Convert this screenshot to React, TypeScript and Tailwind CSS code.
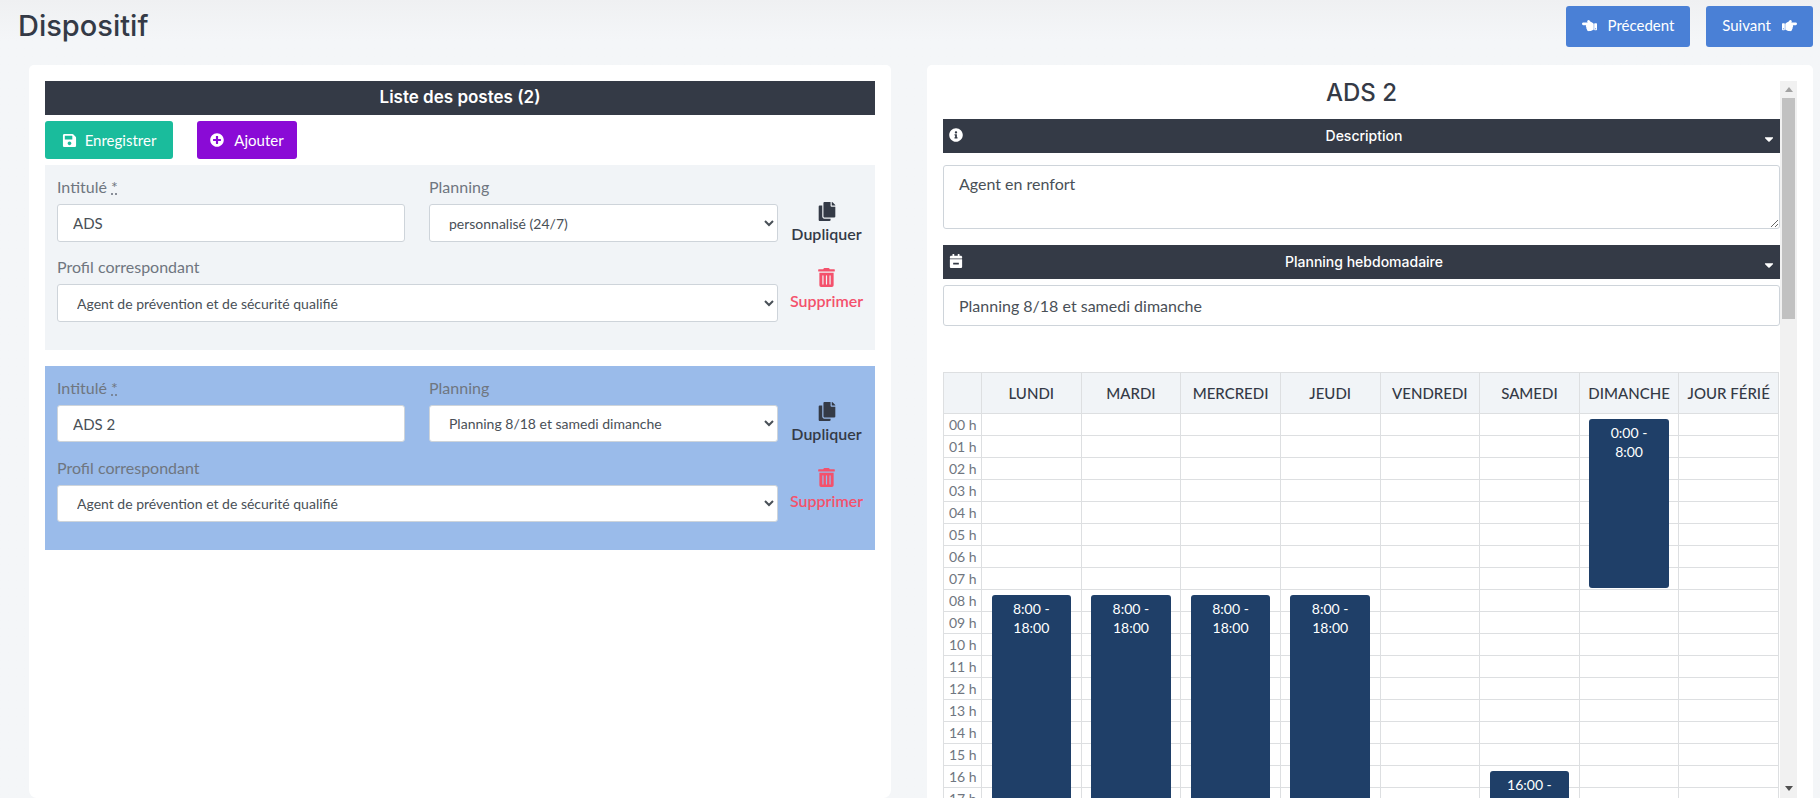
import { FaCalendarMinus, FaCaretDown, FaCopy, FaHandPointLeft, FaHandPointRight, FaInfoCircle, FaPlusCircle, FaSave, FaTrashAlt } from "react-icons/fa";

const DAYS = ["LUNDI", "MARDI", "MERCREDI", "JEUDI", "VENDREDI", "SAMEDI", "DIMANCHE", "JOUR FÉRIÉ"];
const HOURS = Array.from({ length: 18 }, (_, i) => String(i).padStart(2, "0") + " h");

const EVENTS = [
  { day: 0, hour: 8, label: "8:00 -", label2: "18:00", tall: true },
  { day: 1, hour: 8, label: "8:00 -", label2: "18:00", tall: true },
  { day: 2, hour: 8, label: "8:00 -", label2: "18:00", tall: true },
  { day: 3, hour: 8, label: "8:00 -", label2: "18:00", tall: true },
  { day: 5, hour: 16, label: "16:00 -", label2: "", tall: true },
  { day: 6, hour: 0, label: "0:00 -", label2: "8:00", tall: false },
];

function PosteForm({ intitule, planning, first }: { intitule: string; planning: string; first: boolean }) {
  const field = first ? "h-[38px]" : "h-[37px]";
  return (
    <div className={first ? "flex pl-3 mt-[6px] h-[185px] pt-[11px] bg-[#f1f4f7]" : "flex pl-3 mt-4 h-[184px] pt-[11px] bg-[#9abbea]"}>
      <div className="w-[721px]">
        <div className="grid grid-cols-[348px_349px] gap-x-6">
          <div>
            <label className="block h-[22px] mb-[6px] text-[16px] leading-[22px] text-[#6f7680]">
              Intitulé <abbr title="requis" className="underline decoration-dotted">*</abbr>
            </label>
            <input
              readOnly
              value={intitule}
              className={"w-full px-[15px] bg-white border border-[#ced4da] rounded-[3px] text-[15px] text-[#495057] outline-none " + field}
            />
          </div>
          <div>
            <label className="block h-[22px] mb-[6px] text-[16px] leading-[22px] text-[#6f7680]">Planning</label>
            <select
              value={planning}
              onChange={() => {}}
              className={"w-full px-[15px] bg-white border border-[#ced4da] rounded-[3px] text-[14px] text-[#495057] outline-none " + field}
            >
              <option>{planning}</option>
            </select>
          </div>
        </div>
        <label className={"block h-[22px] mb-[6px] text-[16px] leading-[22px] text-[#6f7680] " + (first ? "mt-[14px]" : "mt-[15px]")}>
          Profil correspondant
        </label>
        <select
          value="Agent de prévention et de sécurité qualifié"
          onChange={() => {}}
          className={"w-full px-[15px] bg-white border border-[#ced4da] rounded-[3px] text-[14px] text-[#495057] outline-none " + field}
        >
          <option>Agent de prévention et de sécurité qualifié</option>
        </select>
      </div>
      <div className={"w-[97px] flex flex-col items-center " + (first ? "pt-[26px]" : "pt-[25px]")}>
        <FaCopy className="w-[18px] h-[19px] text-[#343a46]" />
        <span className="mt-[2px] text-[16px] leading-[22px] font-semibold text-[#343a46]">Dupliquer</span>
        <FaTrashAlt className="mt-[23px] w-[17px] h-[19px] text-[#f4516c]" />
        <span className="mt-[3px] text-[16px] leading-[22px] font-semibold text-[#f4516c]">Supprimer</span>
      </div>
    </div>
  );
}

function SectionBar({ icon, title }: { icon: React.ReactNode; title: string }) {
  return (
    <div className="relative h-[34px] bg-[#343a46] flex items-center justify-center font-['Inter',sans-serif] text-[14px] text-white font-medium">
      <span className="absolute left-[6px] top-[9px]">{icon}</span>
      <span className="ml-[5px] -mt-[2px]">{title}</span>
      <FaCaretDown className="absolute right-[4px] top-[13px] w-[14px] h-[14px]" />
    </div>
  );
}

export default function App() {
  return (
    <div className="h-[798px] overflow-hidden bg-gradient-to-b from-[#eff0f2] via-[#f4f6f8] via-[5%] to-[#f4f6f8] font-['Lato','Noto_Sans',sans-serif]">
      <div className="h-[65px] flex items-start justify-between pl-[18px] pr-[7px]">
        <h1 className="mt-[8px] font-['Inter',sans-serif] text-[29px] leading-[36px] font-medium text-[#343a46]">Dispositif</h1>
        <div className="flex gap-4 pt-[6px]">
          <button className="h-[41px] w-[124px] pb-[3px] flex items-center justify-center gap-[11px] bg-[#4a80d6] rounded-[3px] text-[15px] text-white">
            <FaHandPointLeft className="w-[15px] h-[15px]" />
            Précedent
          </button>
          <button className="h-[41px] w-[107px] pb-[3px] flex items-center justify-center gap-[11px] bg-[#4a80d6] rounded-[3px] text-[15px] text-white">
            Suivant
            <FaHandPointRight className="w-[15px] h-[15px]" />
          </button>
        </div>
      </div>

      <div className="flex gap-9 pl-[29px] pr-[7px]">
        <div className="w-[862px] h-[733px] px-4 pt-4 bg-white rounded-t-[5px] rounded-b-[8px]">
          <div className="h-[34px] flex items-center justify-center bg-[#343a46] font-['Inter',sans-serif] text-[17px] font-semibold text-white">
            Liste des postes (2)
          </div>
          <div className="flex gap-6 mt-[6px]">
            <button className="w-[128px] h-[38px] flex items-center justify-center gap-[8px] bg-[#1abc9c] rounded-[3px] text-[15px] text-white">
              <FaSave className="w-[15px] h-[15px]" />
              Enregistrer
            </button>
            <button className="w-[100px] h-[38px] flex items-center justify-center gap-[10px] bg-[#8a0bd6] rounded-[3px] text-[15px] text-white">
              <FaPlusCircle className="w-[14px] h-[14px]" />
              Ajouter
            </button>
          </div>
          <PosteForm intitule="ADS" planning="personnalisé (24/7)" first={true} />
          <PosteForm intitule="ADS 2" planning="Planning 8/18 et samedi dimanche" first={false} />
        </div>

        <div className="w-[886px] h-[733px] pl-4 pt-4 pr-4 bg-white rounded-t-[5px] overflow-hidden">
          <div className="flex h-[717px]">
            <div className="w-[837px] overflow-hidden">
              <h2 className="h-[38px] text-center font-['Inter',sans-serif] text-[24px] leading-[24px] font-medium text-[#343a46]">ADS 2</h2>
              <SectionBar icon={<FaInfoCircle className="w-[14px] h-[14px]" />} title="Description" />
              <textarea
                readOnly
                value="Agent en renfort"
                className="block w-full h-[64px] mt-3 px-[15px] py-[6px] border border-[#ced4da] rounded-[3px] text-[16px] leading-[24px] text-[#495057] outline-none"
              />
              <div className="mt-4">
                <SectionBar icon={<FaCalendarMinus className="w-[14px] h-[14px]" />} title="Planning hebdomadaire" />
              </div>
              <input
                readOnly
                value="Planning 8/18 et samedi dimanche"
                className="block w-full h-[41px] mt-[6px] px-[15px] border border-[#ced4da] rounded-[3px] text-[16px] text-[#495057] outline-none"
              />
              <table className="mt-[46px] w-[836px] table-fixed border-collapse text-[14px]">
                <colgroup>
                  <col className="w-[38px]" />
                  {DAYS.map((d) => (
                    <col key={d} />
                  ))}
                </colgroup>
                <thead>
                  <tr className="h-[41px] bg-[#f1f4f7]">
                    <th className="border border-[#dddfe1]" />
                    {DAYS.map((d) => (
                      <th key={d} className="border border-[#dddfe1] px-0 text-[15px] font-medium text-[#343a46] whitespace-nowrap">
                        {d}
                      </th>
                    ))}
                  </tr>
                </thead>
                <tbody>
                  {HOURS.map((h, hour) => (
                    <tr key={h} className="h-[22px]">
                      <td className="border border-[#dddfe1] pl-[5px] text-[14px] leading-[16px] text-[#6f7680] whitespace-nowrap">{h}</td>
                      {DAYS.map((d, day) => {
                        const ev = EVENTS.find((e) => e.day === day && e.hour === hour);
                        return (
                          <td key={d} className="relative border border-[#dddfe1] p-0">
                            {ev && (
                              <div
                                className={
                                  "absolute z-10 top-[5px] left-[9.5px] right-[9.5px] rounded-[3px] bg-[#1f3f68] text-center text-[14px] leading-[19px] text-white pt-[4px] " +
                                  (ev.tall ? "h-[400px]" : "h-[169px]")
                                }
                              >
                                {ev.label}
                                <br />
                                {ev.label2}
                              </div>
                            )}
                          </td>
                        );
                      })}
                    </tr>
                  ))}
                </tbody>
              </table>
            </div>
            <div className="w-[17px] h-full flex flex-col items-center bg-[#f1f1f1]">
              <div className="h-[17px] flex items-center justify-center">
                <div className="w-0 h-0 border-x-[4px] border-x-transparent border-b-[5px] border-b-[#a3a3a3]" />
              </div>
              <div className="w-[13px] h-[221px] bg-[#c1c1c1]" />
              <div className="mt-auto h-[17px] mb-[1px] flex items-center justify-center">
                <div className="w-0 h-0 border-x-[4px] border-x-transparent border-t-[5px] border-t-[#505050]" />
              </div>
            </div>
          </div>
        </div>
      </div>
    </div>
  );
}
